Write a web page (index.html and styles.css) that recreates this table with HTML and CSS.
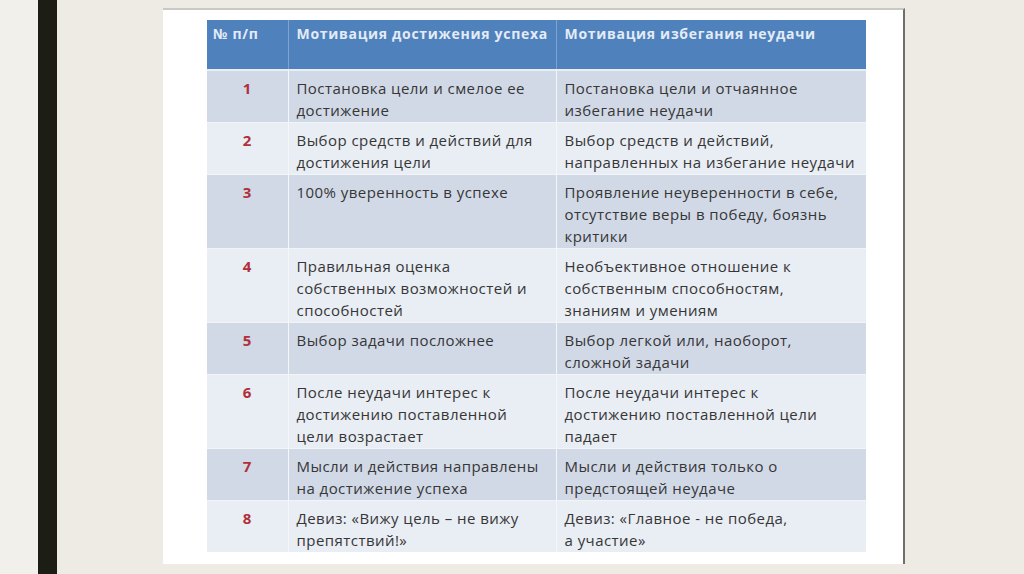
FILE: index.html
```html
<!DOCTYPE html>
<html lang="ru">
<head>
<meta charset="utf-8">
<link rel="stylesheet" href="styles.css">
</head>
<body>
<div class="page">
  <div class="strip"></div>
  <div class="bar"></div>
  <div class="slide">
    <div class="card">
      <table class="mt">
        <colgroup><col class="c1"><col class="c2"><col class="c3"></colgroup>
        <thead>
          <tr><th>№ п/п</th><th>Мотивация достижения успеха</th><th>Мотивация избегания неудачи</th></tr>
        </thead>
        <tbody>
          <tr class="odd"><td class="n">1</td><td>Постановка цели и смелое ее<br>достижение</td><td>Постановка цели и отчаянное<br>избегание неудачи</td></tr>
          <tr class="even"><td class="n">2</td><td>Выбор средств и действий для<br>достижения цели</td><td>Выбор средств и действий,<br>направленных на избегание неудачи</td></tr>
          <tr class="odd"><td class="n">3</td><td>100% уверенность в успехе</td><td>Проявление неуверенности в себе,<br>отсутствие веры в победу, боязнь<br>критики</td></tr>
          <tr class="even"><td class="n">4</td><td>Правильная оценка<br>собственных возможностей и<br>способностей</td><td>Необъективное отношение к<br>собственным способностям,<br>знаниям и умениям</td></tr>
          <tr class="odd"><td class="n">5</td><td>Выбор задачи посложнее</td><td>Выбор легкой или, наоборот,<br>сложной задачи</td></tr>
          <tr class="even"><td class="n">6</td><td>После неудачи интерес к<br>достижению поставленной<br>цели возрастает</td><td>После неудачи интерес к<br>достижению поставленной цели<br>падает</td></tr>
          <tr class="odd"><td class="n">7</td><td>Мысли и действия направлены<br>на достижение успеха</td><td>Мысли и действия только о<br>предстоящей неудаче</td></tr>
          <tr class="even"><td class="n">8</td><td>Девиз: «Вижу цель – не вижу<br>препятствий!»</td><td>Девиз: «Главное - не победа,<br>а участие»</td></tr>
        </tbody>
      </table>
    </div>
  </div>
</div>
</body>
</html>
```

FILE: styles.css
```css
html, body {
  margin: 0;
  padding: 0;
}
body {
  width: 1024px;
  height: 574px;
  overflow: hidden;
  background: #edebe4;
  font-family: "Open Sans", "Liberation Sans", sans-serif;
}
.page {
  display: flex;
  height: 574px;
}
.strip {
  width: 38px;
  background: #f1f0eb;
}
.bar {
  width: 19px;
  background: #1c1d14;
}
.slide {
  padding: 8px 0 0 106px;
}
.card {
  box-sizing: border-box;
  width: 742px;
  height: 556px;
  background: #ffffff;
  border-top: 2px solid #c9c8c3;
  border-right: 2px solid #6f6e69;
  padding: 10px 0 0 44px;
}
.mt {
  border-collapse: collapse;
  width: 659px;
  table-layout: fixed;
  font-size: 15px;
  letter-spacing: 0.45px;
  color: #363636;
  white-space: nowrap;
}
.c1 { width: 81px; }
.c2 { width: 268px; }
.c3 { width: 310px; }
.mt th {
  background: #4f81bd;
  color: #e4ebf5;
  font-weight: 700;
  text-align: left;
  vertical-align: top;
  height: 50px;
  box-sizing: border-box;
  padding: 3px 8px 0 8px;
  line-height: 22px;
  border-bottom: 2px solid #e9eef6;
  border-left: 1px solid #7fa2cf;
  font-size: 14px;
  letter-spacing: 0.7px;
  overflow: hidden;
}
.mt th:first-child {
  border-left: none;
  padding-left: 6px;
}
.mt td {
  vertical-align: top;
  padding: 6px 8px 1px 8px;
  line-height: 22px;
  border-top: 1px solid #f2f4f8;
  border-left: 1px solid #f4f6fa;
  overflow: hidden;
}
.mt td:first-child {
  border-left: none;
}
.odd td { background: #d1d9e7; }
.even td { background: #e9edf4; }
.mt td.n {
  text-align: center;
  color: #b0303a;
  font-weight: 700;
}
```
